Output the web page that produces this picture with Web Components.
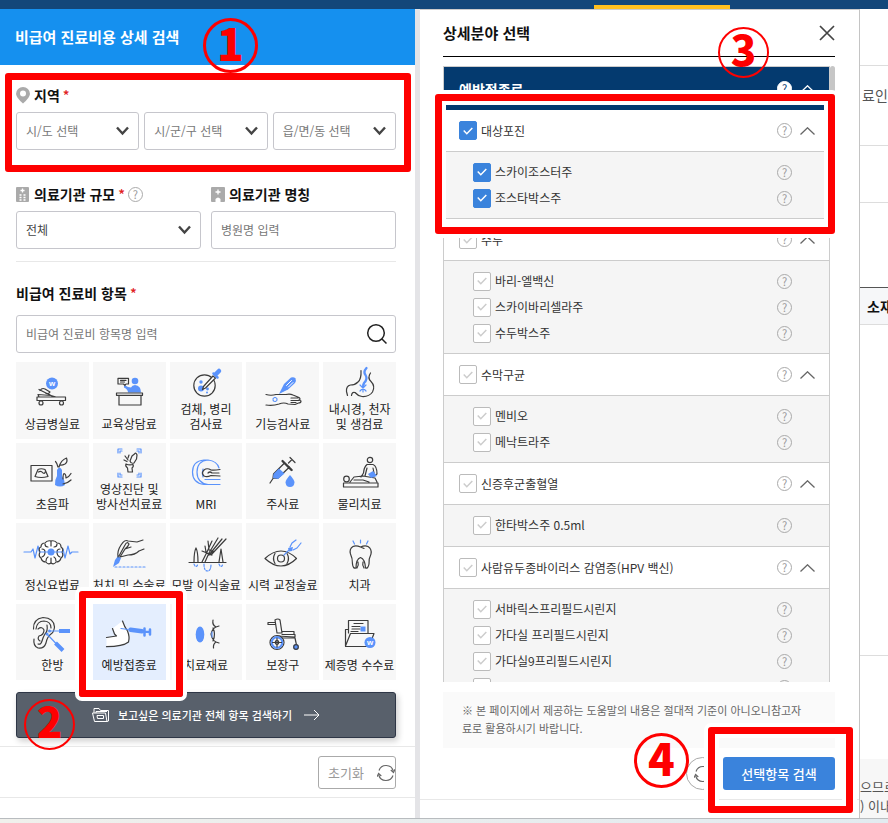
<!DOCTYPE html>
<html lang="ko">
  <head>
    <meta charset="UTF-8" />
    <meta name="viewport" content="width=device-width, initial-scale=1.0" />
    <title>비급여 진료비용 상세 검색</title>
    <style>
      html,
      body {
        margin: 0;
        height: 100%;
      }

      body {
        font-family: "Noto Sans CJK KR", "Liberation Sans", sans-serif;
        font-size: 12px;
        line-height: 18px;
        color: #444;
        --red: #fe0000;
        --line: #ccc;
        --blue: #3a83dc;
        --navy: #043a6f;
      }
    </style>
  </head>
  <body>
    <template id="page-shell">
      <style>
        :host {
          display: grid;
          position: relative;
          grid-template-rows: 9px minmax(0, 1fr) 5px;
          height: 100vh;
          min-height: 820px;
          overflow: hidden;
          background: #fff;
        }

        .top {
          background: #13477a;
          display: grid;
          grid-template-columns: 594fr 136fr 158fr;
          align-items: end;
        }

        .top i {
          grid-column: 2;
          height: 4px;
          background: #ffc020;
        }

        .columns {
          display: grid;
          grid-template-columns: minmax(0, 415fr) 5px minmax(0, 440fr) minmax(0, 28fr);
          min-height: 0;
        }

        .gutter {
          background: #e4e4e7;
        }

        .bottom {
          border-top: 1px solid #b8bcbf;
          background: linear-gradient(90deg, #f0f0ec, #e2ebf0);
        }
      </style>
      <div class="top"><i></i></div>
      <div class="columns">
        <slot name="search"></slot>
        <div class="gutter"></div>
        <slot name="detail"></slot>
        <slot name="behind"></slot>
      </div>
      <div class="bottom"></div>
      <slot></slot>
    </template>

    <template id="search-panel">
      <style>
        :host {
          display: block;
          min-width: 0;
          background: #fff;
        }

        h1 {
          margin: 0;
          padding: 0 15px;
          font-size: 15px;
          line-height: 56px;
          font-weight: 700;
          color: #fff;
          background: #1590ef;
        }

        .body {
          padding: 18px 19px 8px 16px;
        }

        .footer {
          display: flex;
          justify-content: flex-end;
          padding: 9px 19px 8px;
          border: solid #e8e8e8;
          border-width: 1px 0;
        }
      </style>
      <h1><slot name="title"></slot></h1>
      <div class="body"><slot></slot></div>
      <div class="footer"><slot name="footer"></slot></div>
    </template>

    <template id="field-row">
      <style>
        :host {
          display: flex;
          gap: 5px;
        }

        :host([wide]) {
          gap: 10px;
          margin-top: 32px;
          padding-bottom: 12px;
          border-bottom: 1px solid #e8e8e8;
        }

        ::slotted(*) {
          flex: 1 1 0;
          min-width: 0;
        }
      </style>
      <slot></slot>
    </template>

    <template id="field-title">
      <style>
        :host {
          display: flex;
          align-items: center;
          height: 24px;
          font-size: 14px;
          font-weight: 700;
          color: #111;
        }

        :host([required])::after {
          content: "*";
          margin-left: 3px;
          color: #e02020;
          font-weight: 500;
        }
      </style>
      <slot></slot>
    </template>

    <template id="gray-icon">
      <style>
        :host {
          display: block;
          width: 14px;
          height: 16px;
          margin-right: 4px;
        }

        svg {
          display: block;
        }
      </style>
    </template>

    <template id="select-field">
      <style>
        :host {
          display: block;
        }

        .head {
          display: flex;
          align-items: center;
          gap: 3px;
          margin-bottom: 5px;
        }

        :host(:not([titled])) .head {
          display: none;
        }

        .box {
          display: grid;
          align-items: center;
        }

        select,
        svg {
          grid-area: 1 / 1;
        }

        select {
          appearance: none;
          box-sizing: border-box;
          width: 100%;
          height: 38px;
          padding: 0 30px 1px 9px;
          border: 1px solid #c6c6cc;
          border-radius: 3px;
          background: #fff;
          font: inherit;
          color: #777;
        }

        :host([titled]) select {
          color: #444;
        }

        svg {
          justify-self: end;
          margin-right: 10px;
          pointer-events: none;
        }
      </style>
      <div class="head">
        <label for="control"><slot name="label"></slot></label>
        <slot name="help"></slot>
      </div>
      <div class="box">
        <select id="control"></select>
        <svg width="13" height="10" viewBox="0 0 13 10" fill="none" stroke="#444" stroke-width="2.4">
          <path d="M1 1.5L6.5 7.5L12 1.5" />
        </svg>
      </div>
    </template>

    <template id="text-field">
      <style>
        :host {
          display: block;
        }

        label {
          display: block;
          margin-bottom: 5px;
        }

        :host([search]) label {
          margin: 19px 0 10px;
        }

        .box {
          display: grid;
          align-items: center;
        }

        input,
        button {
          grid-area: 1 / 1;
        }

        input {
          box-sizing: border-box;
          width: 100%;
          height: 38px;
          padding: 0 9px 1px;
          border: 1px solid #c6c6cc;
          border-radius: 3px;
          font: inherit;
          color: #444;
        }

        input::placeholder {
          color: #777;
        }

        button {
          display: none;
          justify-self: end;
          margin-right: 8px;
          padding: 0;
          border: 0;
          background: none;
        }

        :host([search]) button {
          display: block;
        }

        svg {
          display: block;
        }
      </style>
      <label for="control"><slot></slot></label>
      <div class="box">
        <input id="control" type="text" />
        <button type="button" aria-label="검색">
          <svg width="22" height="22" viewBox="0 0 22 22" fill="none" stroke="#222" stroke-width="1.5">
            <circle cx="10" cy="10" r="8.3" />
            <path d="M16 16L20.500 20.500" />
          </svg>
        </button>
      </div>
    </template>

    <template id="help-button">
      <style>
        :host {
          display: block;
          flex: none;
        }

        button {
          display: block;
          box-sizing: border-box;
          width: 15px;
          height: 15px;
          padding: 0;
          border: 1px solid #aaa;
          border-radius: 50%;
          background: none;
          font: 11px/13px "Noto Sans CJK KR", sans-serif;
          color: #999;
        }

        :host([light]) button {
          border-color: #fff;
          background: #fff;
          color: var(--navy);
        }
      </style>
      <button type="button">?</button>
    </template>

    <template id="item-grid">
      <style>
        :host {
          display: grid;
          grid-template-columns: repeat(5, minmax(0, 1fr));
          grid-template-rows: repeat(4, 1fr);
          gap: 4px;
          min-height: 318px;
          margin: 9px 0 12px;
        }
      </style>
      <slot></slot>
    </template>

    <template id="item-tile">
      <style>
        :host {
          display: grid;
        }

        button {
          display: flex;
          flex-direction: column;
          align-items: center;
          justify-content: flex-end;
          gap: 8px;
          min-width: 0;
          padding: 0 0 8px;
          border: 0;
          background: #f7f7f7;
          font: inherit;
          line-height: 15px;
          color: #222;
          white-space: nowrap;
        }

        :host([double]) button {
          gap: 2px;
        }

        :host([active]) button {
          background: #e4eefe;
        }

        svg {
          display: block;
          overflow: visible;
          fill: none;
          stroke: #3c3c3c;
          stroke-width: 1.2;
          stroke-linecap: round;
          stroke-linejoin: round;
        }

        .b {
          stroke: #5b93fb;
        }

        .f {
          fill: #5b93fb;
          stroke: none;
        }

        .w {
          fill: #fff;
        }

        text {
          fill: #fff;
          stroke: none;
          font: 700 8px "Liberation Sans", sans-serif;
          text-anchor: middle;
        }
      </style>
      <button type="button">
        <svg width="56" height="32" viewBox="0 0 56 32" aria-hidden="true"></svg>
        <span><slot></slot></span>
      </button>
    </template>

    <template id="banner-button">
      <style>
        :host {
          display: block;
        }

        button {
          display: flex;
          align-items: center;
          justify-content: center;
          gap: 9px;
          box-sizing: border-box;
          width: 100%;
          height: 46px;
          border: 1px solid #2e3646;
          border-radius: 3px;
          background: #58606b;
          box-shadow: 2px 3px 6px rgba(0, 0, 0, 0.2);
          font: inherit;
          font-size: 11px;
          font-weight: 500;
          color: #fff;
        }

        svg {
          fill: none;
          stroke: #fff;
        }

        svg:last-child {
          margin-left: 3px;
        }
      </style>
      <button type="button">
        <svg width="17" height="14" viewBox="0 0 17 14">
          <path d="M2 5V.5H7L8.500 2.500H16.500V13L15 13.500H2.500L.5 5H13.500L15 13.500M4 5V3.500H15M5 7.500H11.500V10.500H5.500Z" />
        </svg>
        <slot></slot>
        <svg width="16" height="12" viewBox="0 0 16 12"><path d="M0 6H15M10 1L15 6L10 11" /></svg>
      </button>
    </template>

    <template id="reset-button">
      <style>
        :host {
          display: block;
        }

        button {
          display: flex;
          align-items: center;
          justify-content: space-between;
          box-sizing: border-box;
          width: 78px;
          height: 33px;
          padding: 0 0 0 9px;
          border: 1px solid #aaa;
          border-radius: 3px;
          background: #fff;
          font: inherit;
          font-size: 13px;
          color: #999;
        }

        :host([round]) button {
          width: 33px;
          padding: 0 7px;
          border-radius: 50%;
        }

        svg {
          flex: none;
          fill: none;
          stroke: #666;
          stroke-width: 1.2;
        }
      </style>
      <button type="button">
        <slot></slot>
        <svg width="18" height="18" viewBox="0 0 18 18">
          <path d="M2 6.500A7.500 7.500 0 0 1 16.300 7M16 11.500A7.500 7.500 0 0 1 1.700 11" />
          <path d="M13.800 6L16.500 8.500L18 5.200M0 12.800L1.600 9.500L4.300 12" />
        </svg>
      </button>
    </template>

    <template id="detail-panel">
      <style>
        :host {
          display: flex;
          flex-direction: column;
          min-width: 0;
          min-height: 0;
          border-top: 1px solid #ccc;
          border-right: 1px solid #c4c4c4;
          background: #fff;
        }

        header {
          display: flex;
          align-items: center;
          justify-content: space-between;
          height: 46px;
          margin: 0 24px 0 23px;
          border-bottom: 1px solid #000;
        }

        h2 {
          margin: 0;
          font-size: 15px;
          font-weight: 700;
          color: #111;
        }

        .close {
          padding: 0;
          border: 0;
          background: none;
        }

        svg {
          display: block;
        }

        .list {
          display: flex;
          flex: 1 1 0;
          min-height: 0;
          margin: 9px 24px 0 23px;
          overflow: hidden;
        }

        .groups {
          flex: 1;
          min-width: 0;
          border: solid var(--line);
          border-width: 1px 1px 0;
          height: max-content;
        }

        .thumb {
          width: 5px;
          height: 150px;
          border-radius: 3px;
          background: #c6c6c6;
        }

        .note {
          margin: 10px 24px 0 23px;
          padding: 9px 19px 11px;
          background: #fafafa;
          font-size: 11px;
          color: #666;
          white-space: nowrap;
        }

        footer {
          display: flex;
          justify-content: flex-end;
          gap: 4px;
          margin-bottom: 18px;
          padding: 9px 24px 9px 23px;
          border-bottom: 1px solid #e8e8e8;
        }

        .submit {
          width: 112px;
          height: 33px;
          padding: 0;
          border: 0;
          border-radius: 3px;
          background: var(--blue);
          font: inherit;
          font-size: 13px;
          font-weight: 500;
          color: #fff;
        }
      </style>
      <header>
        <h2><slot name="title"></slot></h2>
        <button class="close" type="button" aria-label="닫기">
          <svg width="16" height="16" viewBox="0 0 16 16" stroke="#444" stroke-width="1.7">
            <path d="M1 1L15 15M15 1L1 15" />
          </svg>
        </button>
      </header>
      <div class="list">
        <div class="groups"><slot></slot></div>
        <div class="thumb"></div>
      </div>
      <div class="note"><slot name="note"></slot></div>
      <footer>
        <reset-button round></reset-button>
        <button class="submit" type="button"><slot name="submit"></slot></button>
      </footer>
    </template>

    <template id="list-head">
      <style>
        :host {
          display: flex;
          align-items: center;
          height: 43px;
          padding: 0 14px 0 15px;
          background: var(--navy);
          color: #fff;
          font-size: 14px;
          font-weight: 700;
        }

        span {
          flex: 1;
        }

        svg {
          margin-left: 8px;
        }
      </style>
      <span><slot></slot></span>
      <help-button light></help-button>
      <svg width="15" height="8" viewBox="0 0 15 8" fill="none" stroke="#fff" stroke-width="1.3">
        <path d="M.5 7.500L7.500 .8L14.500 7.500" />
      </svg>
    </template>

    <template id="check-item">
      <style>
        :host {
          display: flex;
          align-items: center;
          height: 26px;
          padding: 0 37px 0 29px;
        }

        :host([group]) {
          height: 41px;
          padding: 0 14px 0 15px;
          background: #fff;
          border-bottom: 1px solid var(--line);
        }

        .box {
          display: grid;
          place-items: center;
          margin-right: 4px;
        }

        input,
        .tick {
          grid-area: 1 / 1;
        }

        input {
          appearance: none;
          box-sizing: border-box;
          width: 18px;
          height: 19px;
          margin: 0;
          border: 1px solid #bbb;
          border-radius: 2px;
          background: #fff;
        }

        input:checked {
          border-color: var(--blue);
          background: var(--blue);
        }

        .tick {
          stroke: #ccc;
          pointer-events: none;
        }

        input:checked + .tick {
          stroke: #fff;
        }

        label {
          flex: 1;
          color: #333;
          white-space: nowrap;
        }

        .fold {
          display: none;
          margin-left: 8px;
          padding: 0;
          border: 0;
          background: none;
        }

        :host([group]) .fold {
          display: block;
        }

        svg {
          display: block;
          fill: none;
        }
      </style>
      <div class="box">
        <input id="check" type="checkbox" />
        <svg class="tick" width="10" height="8" viewBox="0 0 10 8" stroke-width="1.5">
          <path d="M.7 3.500L3.800 6.700L9.300 1" />
        </svg>
      </div>
      <label for="check"><slot></slot></label>
      <help-button></help-button>
      <button class="fold" type="button" aria-label="접기">
        <svg width="15" height="8" viewBox="0 0 15 8" stroke="#666" stroke-width="1.3">
          <path d="M.5 7.500L7.500 .8L14.500 7.500" />
        </svg>
      </button>
    </template>

    <template id="check-group">
      <style>
        :host {
          display: block;
        }

        .items {
          box-sizing: border-box;
          min-height: 42px;
          padding: 7px 0;
          background: #f5f5f5;
          border-bottom: 1px solid var(--line);
        }
      </style>
      <slot name="head"></slot>
      <div class="items"><slot></slot></div>
    </template>

    <template id="behind-page">
      <style>
        :host {
          display: flex;
          flex-direction: column;
          min-width: 0;
          overflow: hidden;
          white-space: nowrap;
          font-size: 14px;
          color: #555;
        }

        div {
          box-sizing: border-box;
          border-bottom: 1px solid #ddd;
        }

        .first,
        .third {
          height: 57px;
        }

        .second {
          height: 80px;
          padding: 20px 2px;
        }

        .fourth {
          height: 85px;
          border-color: #555;
        }

        .head {
          height: 37px;
          padding: 9px 7px;
          background: #f6f7f9;
          font-weight: 700;
          color: #111;
        }

        .blank {
          height: 331px;
        }

        .foot {
          margin-top: auto;
          padding: 18px 0 3px;
          border: 0;
          background: #f7f7f7;
          line-height: 19px;
          font-size: 13px;
        }
      </style>
      <div class="first"></div>
      <div class="second"><slot name="menu"></slot></div>
      <div class="third"></div>
      <div class="fourth"></div>
      <div class="head"><slot name="column"></slot></div>
      <div class="blank"></div>
      <div class="foot"><slot name="foot"></slot></div>
    </template>

    <template id="callout-box">
      <style>
        :host {
          position: absolute;
          box-sizing: border-box;
          border: 7px solid var(--red);
          border-radius: 3px;
          box-shadow: 0 0 0 4px #fff, inset 0 0 0 4px #fff;
          pointer-events: none;
        }
      </style>
    </template>

    <template id="step-badge">
      <style>
        :host {
          position: absolute;
          display: flex;
          justify-content: center;
          box-sizing: border-box;
          width: 51px;
          height: 51px;
          border: 2px solid var(--red);
          border-radius: 50%;
          font-size: 42px;
          line-height: 38px;
          font-weight: 900;
          color: var(--red);
          pointer-events: none;
        }

        :host([large]) {
          width: 55px;
          height: 55px;
          border-width: 3px;
          font-size: 44px;
          line-height: 42px;
        }
      </style>
      <slot></slot>
    </template>

    <page-shell>
      <search-panel slot="search">
        <span slot="title">비급여 진료비용 상세 검색</span>

        <field-title required style="margin-bottom: 5px"><gray-icon name="pin"></gray-icon>지역</field-title>
        <field-row>
          <select-field value="시/도 선택"></select-field>
          <select-field value="시/군/구 선택"></select-field>
          <select-field value="읍/면/동 선택"></select-field>
        </field-row>
        <field-row wide>
          <select-field titled value="전체">
            <field-title slot="label" required><gray-icon name="building"></gray-icon>의료기관 규모</field-title>
            <help-button slot="help"></help-button>
          </select-field>
          <text-field placeholder="병원명 입력">
            <field-title><gray-icon name="clinic"></gray-icon>의료기관 명칭</field-title>
          </text-field>
        </field-row>
        <text-field search placeholder="비급여 진료비 항목명 입력">
          <field-title required>비급여 진료비 항목</field-title>
        </text-field>

        <item-grid>
          <item-tile icon="bed">상급병실료</item-tile>
          <item-tile icon="desk">교육상담료</item-tile>
          <item-tile icon="dish" double>검체, 병리<br />검사료</item-tile>
          <item-tile icon="wrist">기능검사료</item-tile>
          <item-tile icon="stomach" double>내시경, 천자<br />및 생검료</item-tile>
          <item-tile icon="ultrasound">초음파</item-tile>
          <item-tile icon="joint" double>영상진단 및<br />방사선치료료</item-tile>
          <item-tile icon="mri">MRI</item-tile>
          <item-tile icon="syringe">주사료</item-tile>
          <item-tile icon="therapy">물리치료</item-tile>
          <item-tile icon="brain">정신요법료</item-tile>
          <item-tile icon="scalpel">처치 및 수술료</item-tile>
          <item-tile icon="hair">모발 이식술료</item-tile>
          <item-tile icon="eye">시력 교정술료</item-tile>
          <item-tile icon="tooth">치과</item-tile>
          <item-tile icon="ear">한방</item-tile>
          <item-tile icon="vaccine" active>예방접종료</item-tile>
          <item-tile icon="lens">치료재료</item-tile>
          <item-tile icon="wheelchair">보장구</item-tile>
          <item-tile icon="folder">제증명 수수료</item-tile>
        </item-grid>

        <banner-button>보고싶은 의료기관 전체 항목 검색하기</banner-button>
        <reset-button slot="footer">초기화</reset-button>
      </search-panel>

      <detail-panel slot="detail">
        <span slot="title">상세분야 선택</span>
        <list-head>예방접종료</list-head>
        <check-group>
          <check-item slot="head" group checked>대상포진</check-item>
          <check-item checked>스카이조스터주</check-item>
          <check-item checked>조스타박스주</check-item>
        </check-group>
        <check-group>
          <check-item slot="head" group>수두</check-item>
          <check-item>바리-엘백신</check-item>
          <check-item>스카이바리셀라주</check-item>
          <check-item>수두박스주</check-item>
        </check-group>
        <check-group>
          <check-item slot="head" group>수막구균</check-item>
          <check-item>멘비오</check-item>
          <check-item>메낙트라주</check-item>
        </check-group>
        <check-group>
          <check-item slot="head" group>신증후군출혈열</check-item>
          <check-item>한타박스주 0.5ml</check-item>
        </check-group>
        <check-group>
          <check-item slot="head" group>사람유두종바이러스 감염증(HPV 백신)</check-item>
          <check-item>서바릭스프리필드시린지</check-item>
          <check-item>가다실 프리필드시린지</check-item>
          <check-item>가다실9프리필드시린지</check-item>
          <check-item></check-item>
        </check-group>
        <span slot="note">※ 본 페이지에서 제공하는 도움말의 내용은 절대적 기준이 아니오니참고자<br />료로 활용하시기 바랍니다.</span>
        <span slot="submit">선택항목 검색</span>
      </detail-panel>

      <behind-page slot="behind">
        <span slot="menu">료인</span>
        <span slot="column">소재</span>
        <span slot="foot">으므로<br />) 이내</span>
      </behind-page>

      <callout-box style="left: 5px; top: 73px; width: 406px; height: 99px"></callout-box>
      <callout-box style="left: 79px; top: 591px; width: 104px; height: 106px"></callout-box>
      <callout-box style="left: 435px; top: 94px; width: 400px; height: 140px"></callout-box>
      <callout-box style="left: 708px; top: 727px; width: 145px; height: 86px"></callout-box>
      <step-badge large style="left: 203px; top: 18px">1</step-badge>
      <step-badge style="left: 24px; top: 699px">2</step-badge>
      <step-badge style="left: 718px; top: 27px">3</step-badge>
      <step-badge large style="left: 634px; top: 733px">4</step-badge>
    </page-shell>

    <script>
      // tile icons, drawn on a 56x32 box; b = blue stroke, f = blue fill
      const ICONS = {
        bed: `<circle class="f" cx="28" cy="7.500" r="6"/><text x="28" y="10">w</text>
          <path d="M13 21H41.500V24.500H13ZM15 21L14 18.500L27 19.500L32 21M15 13.500L29 20.500M16 14.500Q18 11.500 21 13L26 16Q25 18 22 17.500"/>
          <circle cx="17" cy="27" r="2"/><circle cx="37.500" cy="27" r="2"/>`,
        desk: `<path class="f" d="M23 10Q24 9 27 11L30 11.500Q31 9 34 9Q40 9.500 40 16.500H27Q27 13.500 23 11.500Z"/>
          <circle class="f" cx="34" cy="5" r="3.300"/>
          <path d="M17 2.300H27.500V8H25L24 9.500L22.500 8H17ZM19.500 4.300H25M19.500 6H23.500M15.500 17H41.500V19.300H15.500ZM18 19.500H40V29H18Z"/>`,
        dish: `<circle cx="26.500" cy="18.500" r="10.700"/><circle class="f" cx="23" cy="15" r="1.700"/>
          <circle class="f" cx="23" cy="21.500" r="3"/><circle class="f" cx="29.500" cy="22" r="1.400"/><circle class="f" cx="29" cy="25.500" r="1"/>
          <path class="w" d="M24.500 22.500L25.500 19.500L35 9L37.500 11L27.500 21Z"/>
          <path class="b" stroke-width="4.500" d="M38 7L41 4"/><path class="b" stroke-width="2.500" d="M35.500 6.500L39.500 10.500"/>`,
        wrist: `<path d="M11 18.500Q16 20 21 18.500L31 18.500Q35 17.500 38 19L44 21.500Q46 23 44 24L46 25Q46 27 43.500 27L40 28.500L33 28Q29 26 24 28Q18 30 11 29M36 22H43M36 24.500H43.500M36 26.500H41"/>
          <circle class="b" cx="20" cy="23.500" r="2" stroke-dasharray="1 1"/>
          <path class="f" d="M24 18L29 8L36 1.500Q39 .5 40.500 2.500Q41.500 4.500 40 7L33 13.500Z"/>
          <path stroke="#fff" stroke-width="1" d="M31.500 9.500L36.500 4.500M33.500 11L38 6.500"/>`,
        stomach: `<path d="M29 3.500Q29.500 12 26 15Q23 18 18.500 18Q14 19 14.500 24.500L15.500 28.500M38.500 6Q35 11 39 14.500Q43.500 19 40.500 25Q37 30 30 29.500Q26 29 23 25.500Q20 24.500 19.500 28.500"/>
          <path class="b" stroke-width="2.300" d="M34.500 1Q31 5 33.500 8Q36 12 32 16L31 20"/>
          <path class="b" d="M28 18L34 24M34 18L28 24M31 17V25"/>`,
        ultrasound: `<path d="M7 9.500H28V25H7ZM14 13.500Q17 12 21 13.500L24 20.500Q17 22.500 11 20.500ZM14.500 16Q17 14.500 19 17Q21 18 21 16"/>
          <path class="f" d="M33 14Q35.500 9 38 14V20Q41 24 41 29Q36 32 31 29Q30.500 24 33 20Z"/>
          <path d="M34 11Q33 7 31.500 5.500M35 11Q37 4 42.500 2Q44 6 41 8Q38 9.500 36 9M39 23Q39 18 40 17.500Q42 18 42 22Q45 21 47 17.500M39 28Q44 27 47 24"/>`,
        joint: `<path class="b" d="M17 6V2H21M36 2H40V6M17 26V30H21M36 30H40V26M19 6V4H21M36 4H38V6M19 26V28H21M36 28H38V26"/>
          <path d="M29 14L31 9L33.500 7Q35 5 36 8L35.500 12L33 16Q30 17 29 14ZM25 17Q28 18.500 32 17.500Q33 19.500 31 21L31.500 25H27L26.500 21Q24 19 25 17ZM24 9L27 13M23 13L26 14.500M28 8L27 11"/>`,
        mri: `<path class="b" d="M26 4Q14.500 5 14.500 16Q14.500 27 26 28.500H42M26 4H30Q19 5 19 16Q19 27 30 28.500M30 4Q39 5 41 12M25 21Q23.500 17 25 13M27 23.500H42"/>
          <path d="M42 13.500Q36 14.500 33 14Q29 11.500 26 14Q23 17 26 20Q29 21.500 33 19.500L42 20M30 17Q32 15 34 17H41"/>`,
        syringe: `<path d="M35 1.500L40 6.500M37 3.500L33.500 7M27.500 5L37 14M29.500 7L18.500 18L18 22L22.500 22.500L34.500 11M18 22.500L15 27"/>
          <path class="f" d="M24 12.500L29.500 17.500L23 23L18 22L18.500 18Z"/><path stroke-width="2.200" d="M27.500 5L36.500 14"/>
          <path class="f" d="M35 19Q39.500 24 39.500 26.500Q39 31 35 31Q31 31 30.500 26.500Q30.500 24 35 19Z"/>`,
        therapy: `<circle cx="38" cy="4" r="2.700"/><path d="M35 8.500H41Q45 10 45 18L42 20M35 8.500Q32 11 31.500 17L29 21M35 12L33 20M41 12L42 17M11.500 27H46V31H11.500ZM18 26L22 21L31 20L43 22L45 26M22 24H31L37 26"/>
          <circle cx="14.500" cy="23" r="2.800"/><path class="f" d="M36 18L41 15L45 20L39 22Z"/>`,
        brain: `<path class="b" d="M0 15H7L9 12L11 21L14 9L16 17L17.500 15H37L39 12L41 21L44 9L46 17L48 15H54"/>
          <path class="w" d="M27 4Q31 3 33 6Q37 6 37 10Q40 12 38 15Q40 19 37 21Q36 25 32 25Q30 28 27 26Q24 28 22 25Q18 25 17 21Q14 19 16 15Q14 11 17 10Q17 6 21 6Q23 3 27 4Z"/>
          <path d="M27 4V9M27 21V26M21 7Q21 10 24 10M33 7Q33 10 30 10M18 12Q21 12 21 15Q21 19 18 20M36 12Q33 12 33 15Q33 19 36 20M22 24Q22 21 24 20M32 24Q32 21 30 20"/>
          <path class="b" d="M16 15H38"/><circle class="f" cx="27" cy="15" r="3.500"/>`,
        scalpel: `<path class="b" stroke-dasharray="2 2" d="M14 30H45"/><path class="f" d="M12 30L14 23L17 19L20 21L18 26Z"/>
          <path d="M17 20Q16 14 20 8Q24 2 27 4L36 5L42 3M18 19L24 8Q26 4 28 7Q27 10 24 12L19 20L27 18Q34 18 38 14L43 12M24 12L30 10"/>`,
        hair: `<path d="M11 25.500H48M16 25Q16 15 18 11Q20 15 20 25M24 25L29 15L34 4M27 25L31 16L40 1M27 9L28 15M30 4L31 13L35 14L31 18L44 2M33 18L48 2M24 14L34 18M41 25L43 12L45 25"/>
          <path class="b" stroke-dasharray="2 1.500" d="M16 27Q18 32 20 27M26 27Q26 34 29.500 34Q33 34 33 27M41 27Q43 32 45 27"/>`,
        eye: `<path d="M10 21.500Q18 14 26 14Q34 14 41.500 21.500Q34 29 26 29Q18 29 10 21.500Z"/><circle cx="26" cy="21.500" r="3.500"/>
          <path d="M20 16.500Q17 21.500 20 26.500M32 16.500Q35 21.500 32 26.500"/>
          <path class="b" d="M29 18L35 12"/><path class="f" d="M33 11L38 10L37 14L34 14.500Z"/><path class="b" d="M35 10L37 6L41 3M38 13L42 11L46 6"/>`,
        tooth: `<path d="M28.500 10Q33 8 36 9.500Q40 12 39 17Q36.500 22 37 27Q36 32 33.500 31Q33 22 28.500 20.500Q24 22 24 31Q21 32 20.500 27Q20.500 21 18.500 17Q17 12 21 9.500Q24 8 28.500 10ZM28.500 10L32 11.500M25 31Q27 28 26 25M32 31Q30 28 31 25"/>
          <path class="b" d="M28.500 3V6M21 4L22.500 7M36 4L34.500 7"/>`,
        ear: `<path d="M9.500 12Q9 2 19 .5Q30 1 30.500 10Q30 15 27 17Q23 20 22 26Q20 32 14 31Q9 29 10 22M12 12Q13 4 20 4Q27 4.500 27 11M14 12Q18 9 20 13Q20 18 15 19Q13 22 16 24M23 8Q24 14 21 17Q19 20 18 24Q17 28 14 27"/>
          <path class="b" d="M25.500 14H35M23 17L32 26.500"/><path class="b" stroke-width="4" stroke-linecap="butt" d="M35 14H46M31.500 26L39 33.500"/>
          <circle class="f" cx="25.500" cy="14" r="1.500"/><circle class="f" cx="23" cy="17" r="1.500"/>`,
        vaccine: `<path class="w" stroke="none" d="M11.500 11.500L21.500 4Q24 10 26.500 14Q29 20 27.500 25Q22 29.500 5.500 29.700V20.500L15.500 19Z"/>
          <path d="M21.500 4Q23.500 10 26.500 14Q29 20 27.500 25Q22 29.500 5.500 29.700M11.500 11.500L13.500 17L15.500 19L5.500 20.500"/>
          <path class="b" d="M20 11.500L27 12.500"/><path class="b" stroke-width="4.500" d="M29.500 12.800L41 14.300"/><path class="b" stroke-width="2.500" d="M40 14.300L49 15M43.500 11.500V18.500M49 12.500V17.500"/>`,
        lens: `<ellipse class="f" cx="22" cy="17.500" rx="4.300" ry="8"/>
          <path d="M35 3Q34 8 38 10Q34 12 33 17Q34 23 38 25Q35 27 35.500 31M35 11Q38 17 35 24M38 10L41 9M38 25L41 26"/><path class="b" d="M34 15V20"/>`,
        wheelchair: `<path d="M13 5.500H20M13 5.500V7.500H20M20 3Q23 1 25 3L27 16H22L20 3M22 19L40 20V17.500H27M27 14.500H39V17M24 21H40L41.500 28"/>
          <circle cx="22" cy="25.500" r="7"/><circle class="b" cx="22" cy="25.500" r="5.300" stroke-width="2.200"/><circle class="w" cx="22" cy="25.500" r="1.800"/>
          <path d="M22 21V30M17.500 25.500H26.500"/><circle class="f" cx="41" cy="30" r="2.800"/><circle cx="41" cy="30" r="2.300"/>`,
        folder: `<path d="M16.500 16V3.500H36V16M13.500 29V12.500H16M13.500 29L18.500 16.500H42L37 29.500H13.500M22 6.500H31M20 9.500H28M20 12H28M19 14.500H26"/>
          <rect class="f" x="28.500" y="9.500" width="5" height="5"/><circle class="f" cx="38" cy="25.500" r="5.500"/><text x="38" y="28">w</text>`,
      };

      const GRAY_ICONS = {
        pin: `<path fill="#aaa" d="M7 0A7 7 0 0 1 14 7Q13.500 11 7 16.500Q.5 11 0 7A7 7 0 0 1 7 0Z"/><circle cx="7" cy="6.500" r="3" fill="#fff"/>`,
        building: `<rect width="13" height="15" y="1" rx="1" fill="#aaa"/><path stroke="#fff" stroke-width="1.3" d="M6.500 2.500V6.500M4.500 4.500H8.500M3.500 9H5.500M7.500 9H9.500M3.500 11.500H5.500M7.500 11.500H9.500M3.500 14H5.500M7.500 14H9.500"/>`,
        clinic: `<rect width="14" height="15" y="1" rx="1" fill="#aaa"/><path stroke="#fff" stroke-width="1.300" d="M7 3.500V8.500M4.500 6H9.500"/><path fill="#fff" d="M4.500 16V13Q7 10 9.500 13V16Z"/>`,
      };

      class BaseElement extends HTMLElement {
        constructor() {
          super();

          const shadowRoot = this.attachShadow({ mode: "open" });

          shadowRoot.appendChild(
            document.getElementById(this.localName).content.cloneNode(true)
          );
        }

        $(selector) {
          return this.shadowRoot.querySelector(selector);
        }
      }

      class GrayIcon extends BaseElement {
        connectedCallback() {
          this.shadowRoot.innerHTML += `<svg width="14" height="17" viewBox="0 0 14 17">${GRAY_ICONS[this.getAttribute("name")]}</svg>`;
        }
      }

      class SelectField extends BaseElement {
        connectedCallback() {
          const value = this.getAttribute("value");

          this.$("select").add(new Option(value));
          if (!this.hasAttribute("titled")) {
            this.$("select").setAttribute("aria-label", value);
          }
        }
      }

      class TextField extends BaseElement {
        connectedCallback() {
          this.$("input").placeholder = this.getAttribute("placeholder");
        }
      }

      class ItemTile extends BaseElement {
        connectedCallback() {
          this.$("svg").innerHTML = ICONS[this.getAttribute("icon")];
          this.$("button").addEventListener("click", () => {
            this.parentElement
              .querySelectorAll("item-tile")
              .forEach((tile) => tile.toggleAttribute("active", tile === this));
          });
        }
      }

      class CheckItem extends BaseElement {
        connectedCallback() {
          this.$("input").checked = this.hasAttribute("checked");
        }
      }

      class CheckGroup extends BaseElement {
        connectedCallback() {
          this.addEventListener("click", (e) => {
            const target = e.composedPath()[0];
            if (!target.closest(".fold")) return;

            const items = this.$(".items");
            items.hidden = !items.hidden;
          });
        }
      }

      window.customElements.define("gray-icon", GrayIcon);
      window.customElements.define("select-field", SelectField);
      window.customElements.define("text-field", TextField);
      window.customElements.define("item-tile", ItemTile);
      window.customElements.define("check-item", CheckItem);
      window.customElements.define("check-group", CheckGroup);

      // these only need their template
      [
        "help-button",
        "reset-button",
        "banner-button",
        "field-title",
        "field-row",
        "item-grid",
        "list-head",
        "search-panel",
        "detail-panel",
        "behind-page",
        "callout-box",
        "step-badge",
        "page-shell",
      ].forEach((name) => {
        window.customElements.define(name, class extends BaseElement {});
      });
    </script>
  </body>
</html>
